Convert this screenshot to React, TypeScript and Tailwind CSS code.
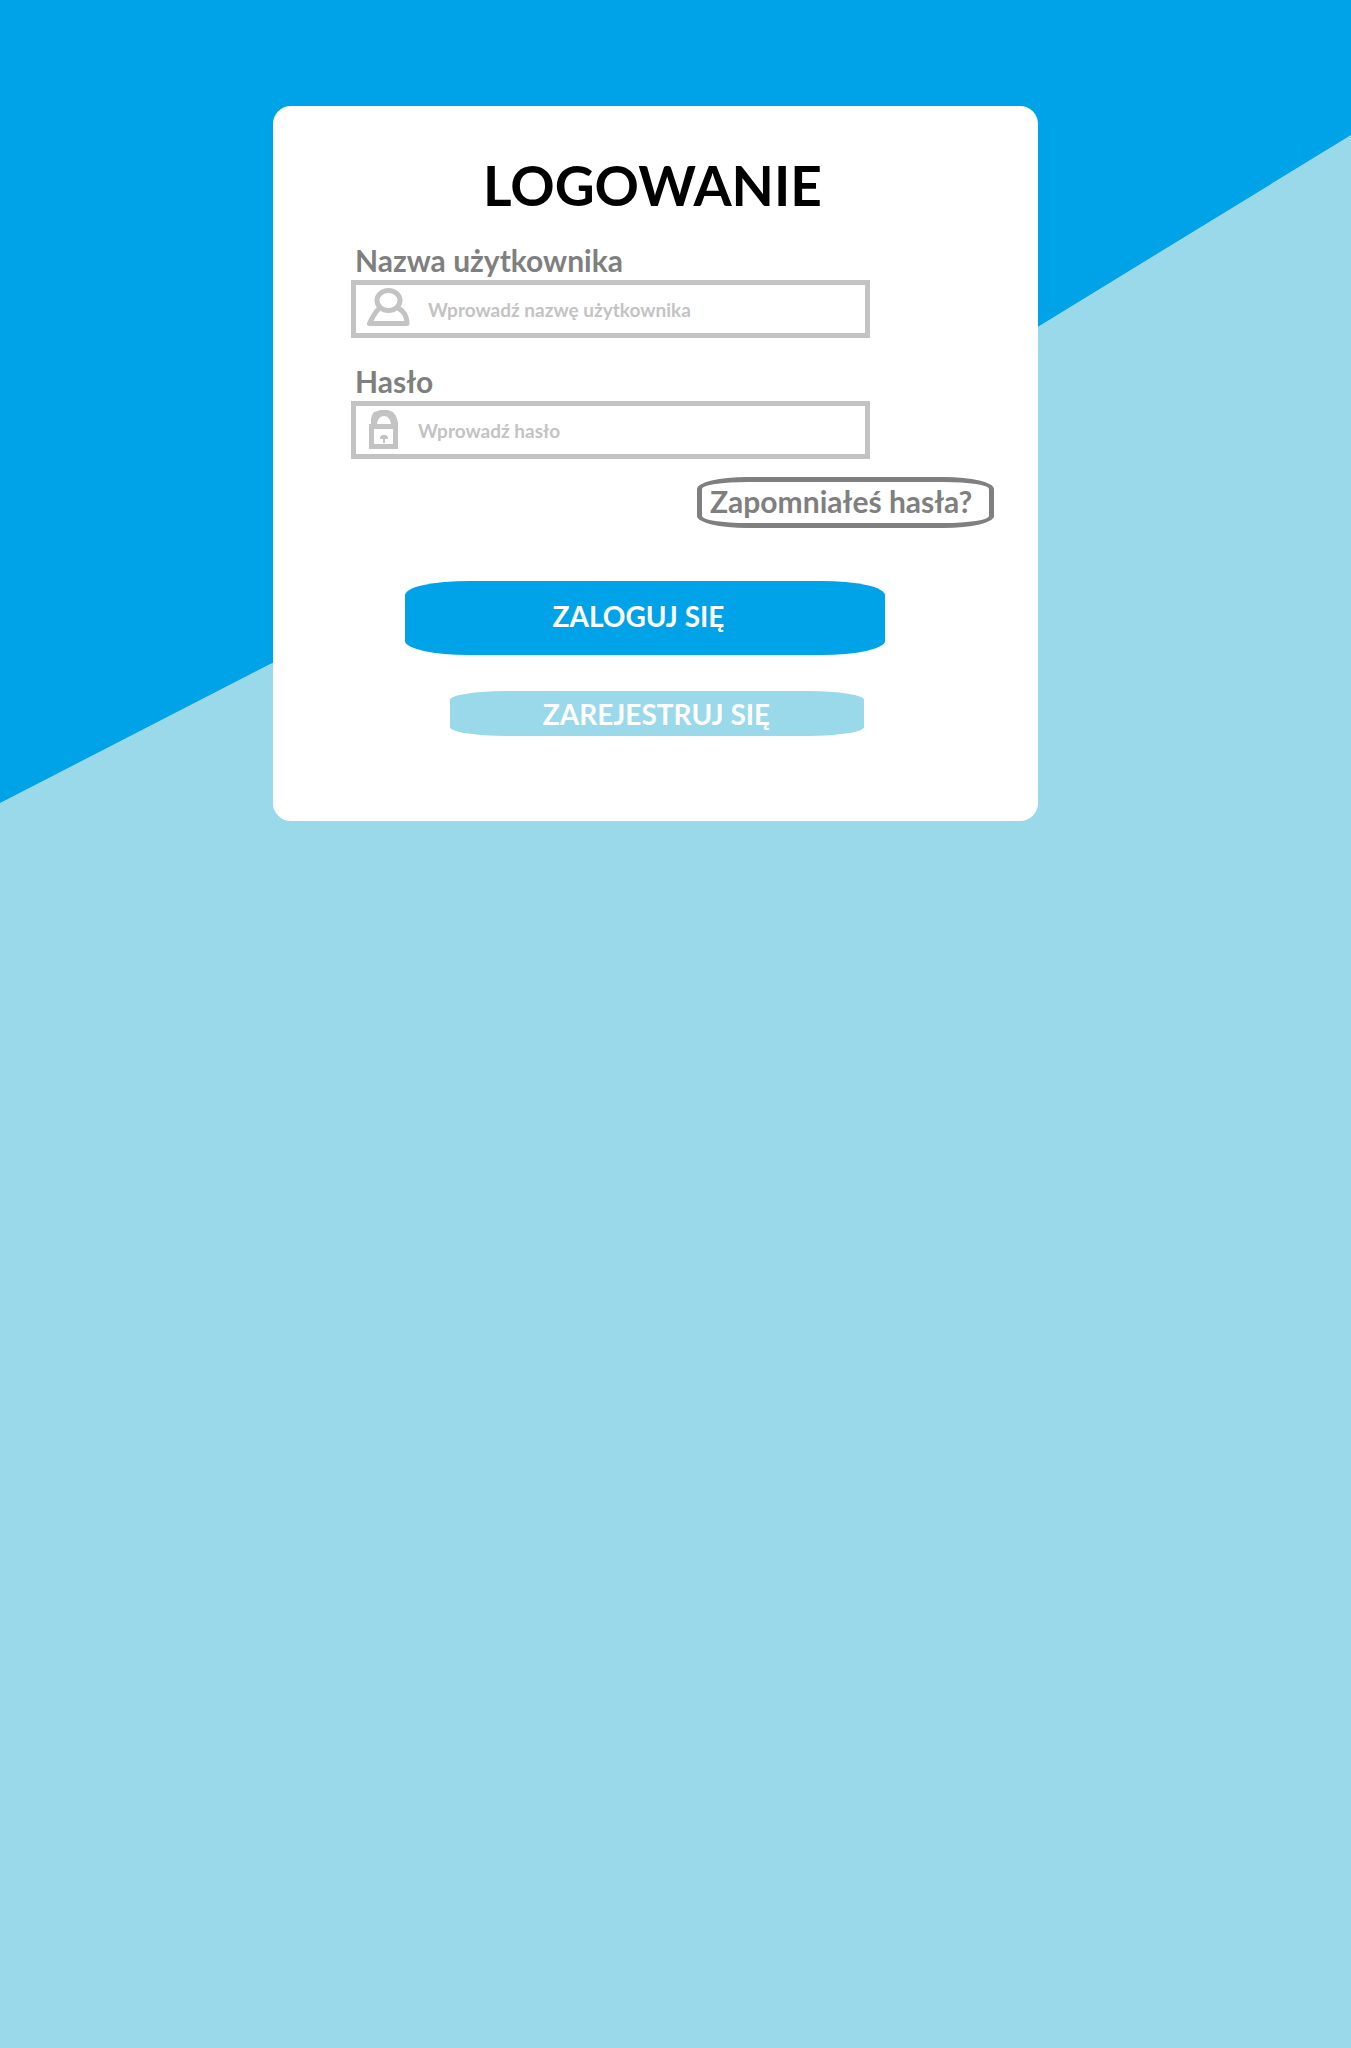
import React from "react";

function UserIcon() {
  return (
    <svg viewBox="2 2 44 40" className="h-10 w-11 shrink-0 overflow-visible" fill="none" stroke="#c3c3c3" strokeWidth="5" aria-hidden="true">
      <ellipse cx="22.5" cy="13.5" rx="11.5" ry="10" />
      <path d="M13 21.5C8.500 26 6 31 3.500 36.500H41C41 30 37.500 24 32 21" strokeLinejoin="round" />
    </svg>
  );
}

function LockIcon() {
  return (
    <svg viewBox="-1 0 34 40" className="h-10 w-[34px] shrink-0" aria-hidden="true">
      <path
        fillRule="evenodd"
        fill="#c3c3c3"
        d="M0 14H2V9L3 5L5 2L9 1L11 0H19L24 2L27 6L29 12V39H0ZM8 14H22C21.500 9 18.500 6 15 6S8.500 9 8 14ZM5 19V34H24V19Z"
      />
      <path fill="#c3c3c3" d="M13 25H17L19 27V29H16V33H14V29H11V27Z" />
    </svg>
  );
}

interface FieldProps {
  id: string;
  label: string;
  type: string;
  placeholder: string;
  icon: React.ReactNode;
}

function Field({ id, label, type, placeholder, icon }: FieldProps) {
  return (
    <div className="w-full max-w-[519px]">
      <label htmlFor={id} className="block pb-1 pl-1 text-[30px] leading-8 font-bold text-[#7f7f7f]">
        {label}
      </label>
      <div className="flex h-[58px] items-center gap-4 border-[5px] border-[#c3c3c3] pr-2 pl-3">
        {icon}
        <input
          id={id}
          type={type}
          placeholder={placeholder}
          className="h-full min-w-0 flex-1 bg-transparent text-[19px] font-bold text-[#7f7f7f] outline-none placeholder:text-[#c3c3c3] placeholder:opacity-100"
        />
      </div>
    </div>
  );
}

export default function App() {
  return (
    <main className="relative isolate flex min-h-screen items-start justify-center bg-[#99d9ea] pt-[106px] pr-10 pb-10 font-['Lato',sans-serif]">
      <div className="absolute inset-x-0 top-0 -z-10 h-[803px] bg-[#00a2e8] [clip-path:polygon(0_0,100%_0,100%_135px,76.8%_327px,20%_664px,0_803px)]" />
      <form
        className="flex w-full max-w-[765px] flex-col rounded-[18px] bg-white pt-[46px] pr-11 pb-[85px] pl-[78px]"
        onSubmit={(e) => e.preventDefault()}
      >
        <h1 className="pr-10 text-center text-[55px] leading-[66px] font-bold text-black">LOGOWANIE</h1>
        <div className="flex flex-col gap-[27px] pt-[26px]">
          <Field id="username" label="Nazwa użytkownika" type="text" placeholder="Wprowadź nazwę użytkownika" icon={<UserIcon />} />
          <Field id="password" label="Hasło" type="password" placeholder="Wprowadź hasło" icon={<LockIcon />} />
        </div>
        <a
          href="#reset"
          className="mt-[18px] flex h-[51px] w-[297px] items-center self-end rounded-[50px/12px] border-[5px] border-[#7f7f7f] pb-1 pl-2 text-[30px] leading-8 font-bold whitespace-nowrap text-[#7f7f7f]"
        >
          Zapomniałeś hasła?
        </a>
        <div className="flex flex-col items-center pt-[53px]">
          <button type="submit" className="mr-14 h-[74px] w-full max-w-[480px] rounded-[64px/14px] bg-[#00a2e8] pr-3 pb-1 text-[28px] font-bold text-white">
            ZALOGUJ SIĘ
          </button>
          <button type="button" className="mt-9 mr-8 h-[45px] w-full max-w-[414px] rounded-[56px/9px] bg-[#99d9ea] text-[28px] font-bold text-white">
            ZAREJESTRUJ SIĘ
          </button>
        </div>
      </form>
    </main>
  );
}
